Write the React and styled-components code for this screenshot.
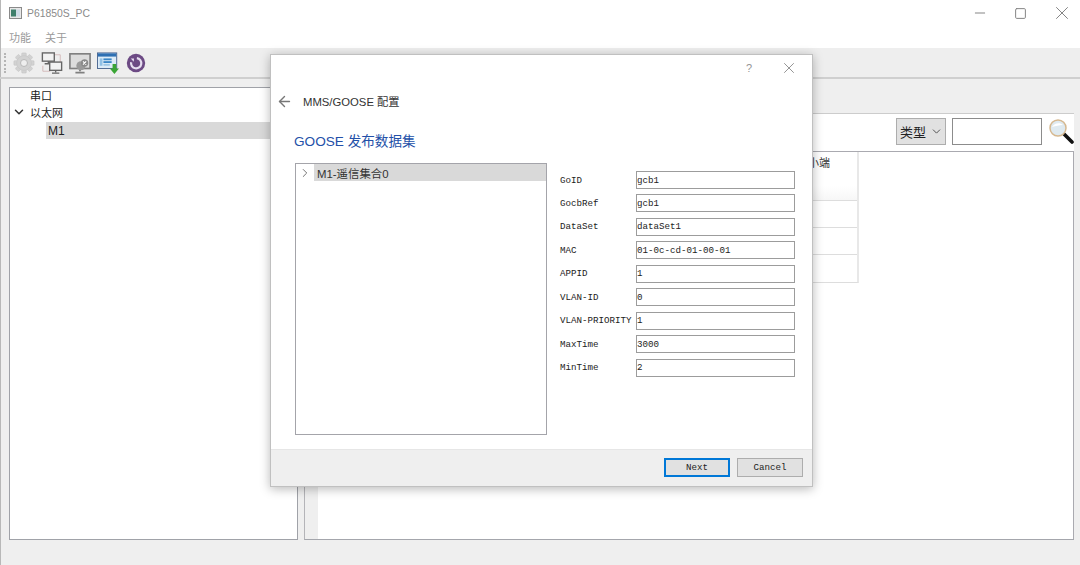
import React from "react";
import styled, { createGlobalStyle } from "styled-components";
import { ChevronDown, ChevronRight, ArrowLeft, Minus, Square, X } from "lucide-react";

const cjk = `"Liberation Sans", "Noto Sans CJK SC", sans-serif`;
const mono = `"Liberation Mono", "Noto Sans CJK SC", monospace`;

const Global = createGlobalStyle`
  html, body { margin: 0; padding: 0; background: #efefef; }
  * { box-sizing: border-box; }
`;

const Win = styled.div`
  position: relative; width: 1080px; height: 565px; overflow: hidden;
  display: flex; flex-direction: column; background: #efefef;
  font-family: ${cjk}; color: #222;
`;
const TitleBar = styled.div`
  height: 28px; background: #fff; display: flex; align-items: center;
  padding: 0 0 2px 9px; gap: 5px; font-size: 10.4px; color: #8a8a8a;
  box-shadow: inset 1px 0 #b8b8b8;
`;
const WinControls = styled.div`
  margin-left: auto; margin-right: -2px; display: flex; color: #858585;
`;
const WinBtn = styled.div`
  width: 41px; height: 26px; display: flex; align-items: center; justify-content: center;
`;
const MenuBar = styled.div`
  height: 20px; background: #fff; display: flex; align-items: center;
  padding: 0 0 2px 9px; gap: 14px; font-size: 11px; color: #9a9a9a;
  box-shadow: inset 1px 0 #b8b8b8;
`;
const Toolbar = styled.div`
  height: 31px; background: #eeeeee; border-bottom: 2px solid #cfcfcf;
  display: flex; align-items: center; padding-left: 4px; gap: 6px;
  box-shadow: inset 1px 0 #b8b8b8;
`;
const Grip = styled.div`
  width: 2px; height: 20px; margin-right: 1px;
  border-left: 2px dotted #b5b5b5;
`;
const ToolIcon = styled.svg`
  width: 22px; height: 22px; flex: none;
`;
const Content = styled.div`
  flex: 1; display: flex; gap: 6px; padding: 8px 6px 25px 9px; min-height: 0;
  box-shadow: inset 1px 0 #b8b8b8;
`;
const LeftTree = styled.div`
  width: 289px; flex: none; background: #fff; border: 1px solid #a0a2a8; font-size: 11px; color: #222;
`;
const TreeRow = styled.div`
  height: 17px; display: flex; align-items: center;
  padding-left: ${p => p.$indent}px;
  padding-bottom: ${p => (p.$lift ? 3 : 0)}px;
`;
const TreeArrow = styled.span`
  width: 18px; flex: none; display: flex; justify-content: center; color: #333;
  margin-right: ${p => p.$gap || 0}px;
`;
const Selected = styled.div`
  flex: 1; height: 17px; background: #d9d9d9; display: flex; align-items: center;
  padding-left: ${p => p.$pad || 2}px; font-size: ${p => p.$size || 12}px;
`;
const RightPanel = styled.div`
  flex: 1; padding-top: 26px; display: flex; min-width: 0;
`;
const Pane = styled.div`
  flex: 1; display: flex; flex-direction: column; min-width: 0;
  border-top: 1px solid #ccc; border-left: 1px solid #b4b4b8; border-bottom: 1px solid #a4a6ac;
  padding-left: 13px;
  background-image: linear-gradient(90deg, #efefef 13px, #fff 13px);
`;
const SearchRow = styled.div`
  height: 37px; display: flex; justify-content: flex-end; align-items: flex-start;
  padding-top: 4px; gap: 6px;
`;
const TypeSelect = styled.div`
  width: 50px; height: 27px; background: #e1e1e1; border: 1px solid #adadad;
  display: flex; align-items: center; justify-content: space-between;
  padding: 0 2px 0 3px; font-size: 13px; color: #222;
`;
const SearchInput = styled.div`
  width: 90px; height: 27px; background: #fff; border: 1px solid #8c8c8c;
`;
const SearchIcon = styled.svg`
  width: 26px; height: 26px; flex: none;
`;
const TableFrame = styled.div`
  flex: 1; border-top: 1px solid #aaaab0; border-right: 1px solid #aaaab0; background: #fff; min-height: 0;
`;
const Table = styled.div`
  width: 541px; display: flex; flex-direction: column;
  border-right: 2px solid #e8e8e8; border-bottom: 1px solid #ddd;
`;
const HeaderCell = styled.div`
  height: 49px; padding: 2px 0 0 490px; font-size: 11px; color: #333;
  border-bottom: 1px solid #ddd; white-space: nowrap;
  background: linear-gradient(#fff 70%, #f7f7f7);
`;
const BodyRow = styled.div`
  height: 27px; border-bottom: 1px solid #ddd;
  &:last-child { border-bottom: 0; }
`;
const Modal = styled.div`
  position: absolute; left: 270px; top: 54px; width: 543px; height: 433px;
  background: #fff; border: 1px solid #c0c0c0; box-shadow: 0 2px 10px rgba(0,0,0,.28);
  display: flex; flex-direction: column;
`;
const ModalTop = styled.div`
  height: 25px; display: flex; justify-content: flex-end; align-items: center;
  padding-right: 14px; gap: 28px; color: #959595; font-size: 11px;
`;
const ModalNav = styled.div`
  height: 22px; margin-top: 10px; display: flex; align-items: center; padding-left: 5px;
  font-size: 11.3px; color: #333; gap: 10px;
`;
const Heading = styled.div`
  margin: 16px 0 0 23px; height: 24px; display: flex; align-items: center; font-size: 13.6px; color: #2350a8;
`;
const ModalBody = styled.div`
  flex: 1; display: flex; padding: 11px 16px 13px 24px; min-height: 0;
`;
const SetTree = styled.div`
  width: 252px; height: 272px; border: 1px solid #a4a4aa; background: #fff; color: #333;
`;
const Form = styled.div`
  display: flex; flex-direction: column; gap: 5.44px; margin: 8px 0 0 13px;
`;
const FormRow = styled.div`
  display: grid; grid-template-columns: 76px 159px; align-items: center;
  font-family: ${mono}; font-size: 9.17px; color: #222;
`;
const Field = styled.div`
  height: 18px; border: 1px solid #9c9c9c; background: #fff;
  display: flex; align-items: center;
`;
const Footer = styled.div`
  height: 37px; background: #efefef; border-top: 1px solid #e6e6e6; display: flex;
  justify-content: flex-end; align-items: flex-start; padding: 8px 9px 0 0; gap: 7px;
`;
const Btn = styled.div`
  width: 66px; height: 19px; background: #e1e1e1; font-family: ${mono}; font-size: 9.17px; color: #222;
  display: flex; align-items: center; justify-content: center;
  border: ${p => (p.$primary ? "2px solid #0078d7" : "1px solid #adadad")};
`;

const AppGlyph = () => (
  <svg width="13" height="12" viewBox="0 0 13 12">
    <rect x=".5" y=".5" width="12" height="11" fill="#e8e8e8" stroke="#8a8a8a" />
    <rect x="2" y="2.5" width="5" height="7" fill="#3f7f6c" />
    <rect x="7" y="2.5" width="4" height="7" fill="#cfdbe6" />
  </svg>
);
const Gear = () => (
  <ToolIcon viewBox="0 0 24 24">
    <g fill="#d2d2d2" stroke="#c4c4c4" strokeWidth=".6">
      {[0, 45, 90, 135].map(a => (
        <rect key={a} x="9.5" y="1" width="5" height="22" rx="1" transform={`rotate(${a} 12 12)`} />
      ))}
      <circle cx="12" cy="12" r="8" />
    </g>
    <circle cx="12" cy="12" r="3.8" fill="#eeeeee" stroke="#b4b4b4" />
  </ToolIcon>
);
const Monitors = () => (
  <ToolIcon viewBox="0 0 24 24">
    <path d="M13 3h8v9" fill="none" stroke="#d2b8b8" />
    <path d="M2 15v6h8" fill="none" stroke="#d2b8b8" />
    <rect x="1.5" y="1" width="13" height="9" fill="#f2f2f2" stroke="#666" strokeWidth="1.5" />
    <path d="M8 10v2M4 12.8h8" stroke="#666" strokeWidth="1.5" />
    <rect x="9.5" y="11" width="13" height="9" fill="#f2f2f2" stroke="#666" strokeWidth="1.5" />
    <path d="M16 20v2M12 23h8" stroke="#666" strokeWidth="1.5" />
  </ToolIcon>
);
const MonitorX = () => (
  <ToolIcon viewBox="0 0 24 24">
    <rect x="1" y="2" width="22" height="16" fill="#dcdcdc" stroke="#808080" strokeWidth="1.8" />
    <path d="M12 18v3M7 22.5h10" stroke="#808080" strokeWidth="2" />
    <circle cx="13" cy="15" r="5" fill="#9a9a9a" />
    <circle cx="17" cy="12" r="4" fill="#8a8a8a" />
    <path d="M15.3 10.3l3.4 3.4M18.7 10.3l-3.4 3.4" stroke="#fff" strokeWidth="1.3" />
  </ToolIcon>
);
const WindowDown = () => (
  <ToolIcon viewBox="0 0 24 24">
    <rect x=".5" y="1" width="21" height="17" fill="#dcebf7" stroke="#46628e" />
    <rect x="1" y="1.5" width="20" height="3.5" fill="#2d6fb3" />
    <rect x="3" y="7" width="3" height="8" fill="#8fc0e6" />
    <rect x="7" y="7" width="9" height="2" fill="#3b86c6" />
    <rect x="7" y="10" width="9" height="2" fill="#3b86c6" />
    <rect x="7" y="13" width="7" height="2" fill="#9cc6e6" />
    <path d="M17 13h4v5h3l-5 6-5-6h3z" fill="#3aa535" />
  </ToolIcon>
);
const Power = () => (
  <ToolIcon viewBox="0 0 24 24">
    <circle cx="12" cy="12" r="10" fill="#6c4a84" />
    <path d="M8.2 8.2A5.6 5.6 0 1 0 15.8 8.2" transform="rotate(-35 12 12)" fill="none" stroke="#e6def0" strokeWidth="2.4" />
    <path d="M6.3 7l3.6.2-.4 3.4z" fill="#e6def0" />
  </ToolIcon>
);
const Magnifier = () => (
  <SearchIcon viewBox="0 0 26 26">
    <path d="M16 16l8 8" stroke="#111" strokeWidth="3.6" strokeLinecap="round" />
    <circle cx="10" cy="10" r="8" fill="#dfeaf0" stroke="#d6b88f" strokeWidth="1.5" />
    <path d="M4 9c2-4 8-5 11-2-4 0-7 1-11 2z" fill="#fff" />
  </SearchIcon>
);

const fields = [
  ["GoID", "gcb1"], ["GocbRef", "gcb1"], ["DataSet", "dataSet1"], ["MAC", "01-0c-cd-01-00-01"],
  ["APPID", "1"], ["VLAN-ID", "0"], ["VLAN-PRIORITY", "1"], ["MaxTime", "3000"], ["MinTime", "2"],
];

export default function App() {
  return (
    <Win>
      <Global />
      <TitleBar>
        <AppGlyph />
        <span>P61850S_PC</span>
        <WinControls>
          <WinBtn><Minus size={16} strokeWidth={1} absoluteStrokeWidth /></WinBtn>
          <WinBtn><Square size={13} strokeWidth={1} absoluteStrokeWidth /></WinBtn>
          <WinBtn><X size={22} strokeWidth={1} absoluteStrokeWidth /></WinBtn>
        </WinControls>
      </TitleBar>
      <MenuBar><span>功能</span><span>关于</span></MenuBar>
      <Toolbar>
        <Grip />
        <Gear /><Monitors /><MonitorX /><WindowDown /><Power />
      </Toolbar>
      <Content>
        <LeftTree>
          <TreeRow $indent={20} $lift>串口</TreeRow>
          <TreeRow $indent={0} $lift><TreeArrow $gap={2}><ChevronDown size={14} strokeWidth={1.5} absoluteStrokeWidth /></TreeArrow>以太网</TreeRow>
          <TreeRow $indent={36}><Selected>M1</Selected></TreeRow>
        </LeftTree>
        <RightPanel>
          <Pane>
            <SearchRow>
              <TypeSelect>类型<ChevronDown size={13} strokeWidth={1} absoluteStrokeWidth color="#555" /></TypeSelect>
              <SearchInput />
              <Magnifier />
            </SearchRow>
            <TableFrame>
              <Table>
                <HeaderCell>小端</HeaderCell>
                <BodyRow /><BodyRow /><BodyRow />
              </Table>
            </TableFrame>
          </Pane>
        </RightPanel>
      </Content>
      <Modal>
        <ModalTop>
          <span>?</span>
          <X size={18} strokeWidth={1} absoluteStrokeWidth />
        </ModalTop>
        <ModalNav>
          <ArrowLeft size={17} strokeWidth={1.4} absoluteStrokeWidth color="#777" />
          <span>MMS/GOOSE 配置</span>
        </ModalNav>
        <Heading>GOOSE 发布数据集</Heading>
        <ModalBody>
          <SetTree>
            <TreeRow $indent={0}>
              <TreeArrow><ChevronRight size={14} strokeWidth={1} absoluteStrokeWidth color="#777" /></TreeArrow>
              <Selected $size={11.4} $pad={3}>M1-遥信集合0</Selected>
            </TreeRow>
          </SetTree>
          <Form>
            {fields.map(([k, v]) => (
              <FormRow key={k}><span>{k}</span><Field>{v}</Field></FormRow>
            ))}
          </Form>
        </ModalBody>
        <Footer>
          <Btn $primary>Next</Btn>
          <Btn>Cancel</Btn>
        </Footer>
      </Modal>
    </Win>
  );
}
